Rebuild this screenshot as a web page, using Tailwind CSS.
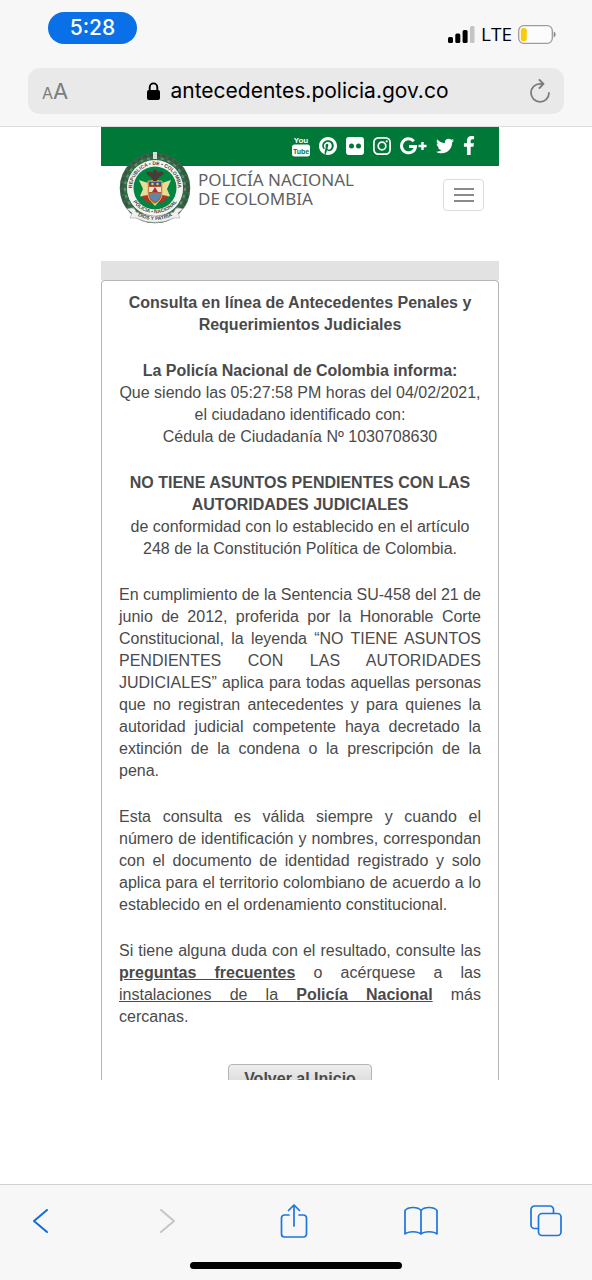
<!DOCTYPE html>
<html lang="es">
<head>
<meta charset="utf-8">
<meta name="viewport" content="width=device-width, initial-scale=1">
<title>Antecedentes - Policía Nacional de Colombia</title>
<script src="https://cdn.jsdelivr.net/npm/@tailwindcss/browser@4"></script>
</head>
<body class="flex min-h-screen flex-col bg-white font-['Liberation_Sans',Arial,sans-serif] text-base text-[#4a4a4a]">

<!-- Browser top chrome -->
<div class="border-b border-[#dcdcdc] bg-[#f7f7f7] px-7 pt-3 pb-3 font-[Inter,sans-serif] text-black">
  <div class="flex h-8 items-center justify-between pr-2 pl-5">
    <div class="flex h-8 w-[89px] items-center justify-center rounded-full bg-[#0a70e8] text-[21px] font-medium text-white">5:28</div>
    <div class="flex items-center gap-1.5 pt-3">
      <svg class="h-[17px] w-[27px]" viewBox="0 0 27 17" aria-hidden="true">
        <rect x="0" y="11" width="5" height="6" rx="1.5"/><rect x="7.300" y="7.500" width="5" height="9.500" rx="1.500"/><rect x="14.600" y="4" width="5" height="13" rx="1.500"/><rect x="22" y="0" width="4.500" height="17" rx="1.500" fill="#c4c4c4"/>
      </svg>
      <span class="font-['Open_Sans',sans-serif] text-[19px] leading-5 font-medium">LTE</span>
      <svg class="h-[19px] w-[38px]" viewBox="0 0 38 19" aria-hidden="true">
        <rect x=".7" y=".7" width="33.600" height="17.600" rx="5" fill="#fcfcfc" stroke="#9b9b9b" stroke-width="1.300"/>
        <rect x="2.800" y="3" width="6" height="13" rx="2.600" fill="#f9cb0b"/>
        <path d="M35.700 6.500q2 1 2 3t-2 3z" fill="#8b8b8b"/>
      </svg>
    </div>
  </div>
  <div class="mt-6 flex h-[46px] items-center justify-between rounded-xl bg-[#e9e9e9] pr-3 pl-3.5">
    <button class="flex w-8 items-baseline text-[#7d7d7d]" aria-label="Tamaño del texto"><span class="text-[16px]">A</span><span class="text-[22px]">A</span></button>
    <div class="flex items-center gap-2.5 pl-0.5">
      <svg class="h-[18px] w-[13px]" viewBox="0 0 13 18" aria-hidden="true"><rect x="0" y="8" width="13" height="10" rx="2"/><path d="M2.700 9V5.400a3.800 4 0 0 1 7.600 0V9" fill="none" stroke="#000" stroke-width="1.900"/></svg>
      <span class="text-[21px] leading-7">antecedentes.policia.gov.co</span>
    </div>
    <button class="flex w-8 justify-center pl-2" aria-label="Recargar">
      <svg class="h-6 w-5" viewBox="0 0 20 24" fill="none" stroke="#7b7b7b" stroke-width="1.800" stroke-linecap="round" stroke-linejoin="round"><path d="M13 4.800H10A9 9 0 1 0 19 14M9.500 1l4 3.900-4 4.100"/></svg>
    </button>
  </div>
</div>

<!-- Web page -->
<main class="flex-1 pr-[93px] pl-[101px]">
  <header class="relative">
    <nav class="flex h-[39px] items-center justify-end gap-[9px] bg-[#007838] pr-6 pb-0.5 text-white" aria-label="Redes sociales">
      <a href="#" aria-label="YouTube"><svg class="h-[22px] w-[18px]" viewBox="0 0 18 22"><text x="9" y="8" text-anchor="middle" font-family="Liberation Sans Narrow, Liberation Sans, sans-serif" font-size="8" font-weight="700" fill="#fff">You</text><rect x="0" y="9.500" width="18" height="12" rx="2.500" fill="#fff"/><text x="9" y="18.500" text-anchor="middle" font-family="Liberation Sans Narrow, Liberation Sans, sans-serif" font-size="7" font-weight="700" fill="#007838">Tube</text></svg></a>
      <a href="#" aria-label="Pinterest"><svg class="h-[18px] w-[18px]" viewBox="0 8 496 496" fill="currentColor"><path d="M496 256c0 137-111 248-248 248-25.600 0-50.200-3.900-73.400-11.100 10.100-16.500 25.200-43.500 30.800-65 3-11.600 15.400-59 15.400-59 8.100 15.400 31.700 28.500 56.800 28.500 74.800 0 128.700-68.800 128.700-154.300 0-81.900-66.900-143.200-152.900-143.200-107 0-163.900 71.800-163.900 150.100 0 36.400 19.400 81.700 50.300 96.100 4.700 2.200 7.200 1.200 8.300-3.300.8-3.400 5-20.300 6.900-28.100.6-2.500.3-4.700-1.700-7.100-10.100-12.500-18.300-35.300-18.300-56.600 0-54.700 41.400-107.600 112-107.600 60.900 0 103.600 41.500 103.600 100.900 0 67.100-33.900 113.600-78 113.600-24.300 0-42.600-20.100-36.700-44.800 7-29.500 20.500-61.300 20.500-82.600 0-19-10.200-34.900-31.400-34.900-24.900 0-44.900 25.700-44.900 60.200 0 22 7.400 36.800 7.400 36.800s-24.500 103.800-29 123.200c-5 21.400-3 51.600-.9 71.200C65.400 450.900 0 361.100 0 256 0 119 111 8 248 8s248 111 248 248z"/></svg></a>
      <a href="#" aria-label="Flickr"><svg class="h-[18px] w-[18px]" viewBox="0 0 18 18"><rect width="18" height="18" rx="3" fill="#fff"/><circle cx="5.500" cy="9" r="2.500" fill="#007838"/><circle cx="12.500" cy="9" r="2.500" fill="#007838"/></svg></a>
      <a href="#" aria-label="Instagram"><svg class="h-[18px] w-[18px]" viewBox="0 0 18 18" fill="none" stroke="#fff" stroke-width="1.700"><rect x=".9" y=".9" width="16.200" height="16.200" rx="4.500"/><circle cx="9" cy="9" r="3.800"/><circle cx="13.700" cy="4.300" r="1.100" fill="#fff" stroke="none"/></svg></a>
      <a href="#" aria-label="Google Plus"><svg class="h-[18px] w-[27px]" viewBox="0 0 27 18" fill="none" stroke="#fff"><path d="M13.800 4.200A7 7 0 1 0 15.500 9.500H9" stroke-width="3"/><path d="M22.500 5v8M18.500 9h8" stroke-width="2.400"/></svg></a>
      <a href="#" aria-label="Twitter"><svg class="h-[18px] w-[18px]" viewBox="0 0 512 512" fill="currentColor"><path d="M459.370 151.716c.325 4.548.325 9.097.325 13.645 0 138.720-105.583 298.558-298.558 298.558-59.452 0-114.680-17.219-161.137-47.106 8.447.974 16.568 1.299 25.340 1.299 49.055 0 94.213-16.568 130.274-44.832-46.132-.975-84.792-31.188-98.112-72.772 6.498.974 12.995 1.624 19.818 1.624 9.421 0 18.843-1.300 27.614-3.573-48.081-9.747-84.143-51.980-84.143-102.985v-1.299c13.969 7.797 30.214 12.670 47.431 13.319-28.264-18.843-46.781-51.005-46.781-87.391 0-19.492 5.197-37.360 14.294-52.954 51.655 63.675 129.300 105.258 216.365 109.807-1.624-7.797-2.599-15.918-2.599-24.040 0-57.828 46.782-104.934 104.934-104.934 30.213 0 57.502 12.670 76.670 33.137 23.715-4.548 46.456-13.320 66.599-25.340-7.798 24.366-24.366 44.833-46.132 57.827 21.117-2.273 41.584-8.122 60.426-16.243-14.292 20.791-32.161 39.308-52.628 54.253z"/></svg></a>
      <a href="#" aria-label="Facebook"><svg class="h-[19px] w-3" viewBox="0 0 320 512" fill="currentColor"><path d="M279.140 288l14.220-92.660h-88.910v-60.130c0-25.350 12.420-50.060 52.240-50.060h40.420V6.260S260.430 0 225.360 0c-73.220 0-121.080 44.380-121.080 124.720v70.620H22.890V288h81.390v224h100.170V288z"/></svg></a>
    </nav>
    <div class="flex items-start justify-between pt-1 pr-[15px] pl-[97px]">
      <p class="font-['Noto_Sans',sans-serif] text-[17px] leading-[19px] text-[#5f5f5f]">POLICÍA NACIONAL<br>DE COLOMBIA</p>
      <button class="mt-[9px] flex h-8 w-[41px] flex-col items-center justify-center gap-1 rounded border border-[#dcdcdc] bg-white" aria-label="Menú">
        <span class="h-0.5 w-5 bg-[#8a8a8a]"></span><span class="h-0.5 w-5 bg-[#8a8a8a]"></span><span class="h-0.5 w-5 bg-[#8a8a8a]"></span>
      </button>
    </div>
    <!-- Emblem overlapping the green bar -->
    <svg class="absolute top-[25px] left-[18px] h-[72px] w-[72px]" viewBox="0 0 72 72" aria-hidden="true">
      <defs>
        <path id="arcTop" d="M14 42.700A23 23 0 1 1 58 42.700"/>
        <path id="arcBottom" d="M10.500 42A26.500 26.500 0 0 0 61.500 42"/>
        <path id="ribbon" d="M17 63Q36 73 55 63"/>
      </defs>
      <circle cx="36" cy="36" r="31.500" fill="none" stroke="#2f6b45" stroke-width="7.500"/>
      <circle cx="36" cy="36" r="33" fill="none" stroke="#3f4f43" stroke-width="2.500" stroke-dasharray="4 2.500"/>
      <circle cx="36" cy="36" r="30" fill="none" stroke="#6f8a72" stroke-width="2" stroke-dasharray="3 4"/>
      <path d="M34 0h4v7h-4z" fill="#cfe2d4"/>
      <circle cx="36" cy="36" r="28" fill="#f3f3ef"/>
      <circle cx="36" cy="36" r="21.500" fill="#008542"/>
      <g font-family="Liberation Sans, sans-serif" font-weight="700" fill="#444">
        <text font-size="5"><textPath href="#arcTop" startOffset="50%" text-anchor="middle">REPÚBLICA • DE • COLOMBIA</textPath></text>
        <text font-size="5"><textPath href="#arcBottom" startOffset="50%" text-anchor="middle">POLICÍA • NACIONAL</textPath></text>
      </g>
      <path d="M20 28l9 3 7-5 7 5 9-3-4 9 3 7-8 2-7 8-7-8-8-2 3-7z" fill="#e9dc96"/>
      <path d="M23 44l6-1 3 8-5-1zM49 44l-6-1-3 8 5-1z" fill="#b0342c"/>
      <path d="M29 29h14v13q0 6-7 10-7-4-7-10z" fill="#b5533f" stroke="#e0b640"/>
      <path d="M30 30h12v4H30z" fill="#3a5686"/>
      <path d="M30 35h12v5H30z" fill="#f1e2cf"/>
      <path d="M30 41h12v2q-1 4-6 7-5-3-6-7z" fill="#5c88a8"/>
      <circle cx="33.500" cy="32" r="1.300" fill="#efc342"/><circle cx="38.500" cy="32" r="1.300" fill="#efc342"/><path d="M33 40l3-5 3 5z" fill="#a72f2c"/>
      <path d="M27 21q4-3 7 0v-3h4v3q3-3 7 0-2 3-5 4l-2 4h-4l-2-4q-3-1-5-4z" fill="#4b3a35"/>
      <path d="M8 57q8-3 9 3 19 8 38 0 1-6 9-3l-5 4 2 5h-6q-19 9-38 0h-6l2-5z" fill="#f0f0f0" stroke="#a5a5a5" stroke-width=".6"/>
      <text font-family="Liberation Sans, sans-serif" font-size="5" font-weight="700" fill="#444"><textPath href="#ribbon" startOffset="50%" text-anchor="middle">DIOS Y PATRIA</textPath></text>
    </svg>
  </header>

  <div class="mt-[50px] h-[19px] bg-[#e2e2e2]"></div>
  <section class="rounded-t border-x border-t border-[#b5b5b5] px-[17px] pt-[11px] leading-[22px]">
    <div class="flex flex-col gap-6">
      <h1 class="text-center font-bold">Consulta en línea de Antecedentes Penales y Requerimientos Judiciales</h1>
      <p class="text-center"><b>La Policía Nacional de Colombia informa:</b><br>Que siendo las 05:27:58 PM horas del 04/02/2021,<br>el ciudadano identificado con:<br>Cédula de Ciudadanía Nº 1030708630</p>
      <p class="text-center"><b>NO TIENE ASUNTOS PENDIENTES CON LAS AUTORIDADES JUDICIALES</b><br>de conformidad con lo establecido en el artículo<br>248 de la Constitución Política de Colombia.</p>
      <p class="text-justify">En cumplimiento de la Sentencia SU-458 del 21 de junio de 2012, proferida por la Honorable Corte Constitucional, la leyenda “NO TIENE ASUNTOS PENDIENTES CON LAS AUTORIDADES JUDICIALES” aplica para todas aquellas personas que no registran antecedentes y para quienes la autoridad judicial competente haya decretado la extinción de la condena o la prescripción de la pena.</p>
      <p class="text-justify">Esta consulta es válida siempre y cuando el número de identificación y nombres, correspondan con el documento de identidad registrado y solo aplica para el territorio colombiano de acuerdo a lo establecido en el ordenamiento constitucional.</p>
      <p class="text-justify">Si tiene alguna duda con el resultado, consulte las <a href="#" class="font-bold underline">preguntas frecuentes</a> o acérquese a las <a href="#" class="underline">instalaciones de la <b>Policía Nacional</b></a> más cercanas.</p>
    </div>
    <!-- The visible page area ends partway down the button -->
    <div class="mt-9 flex h-4 items-start justify-center overflow-hidden">
      <button class="h-[30px] w-36 shrink-0 rounded border border-[#b4b4b4] bg-linear-to-b from-[#efefef] to-[#d0d0d0] font-bold">Volver al Inicio</button>
    </div>
  </section>
</main>

<!-- Browser toolbar -->
<footer class="border-t border-[#d2d2d2] bg-[#f7f7f7] pt-[18px] pb-[11px] text-[#1d76dc]">
  <nav class="flex h-9 items-center justify-between pr-[30px] pl-8" aria-label="Navegador">
    <button aria-label="Atrás"><svg class="h-7 w-[18px]" viewBox="0 0 18 28" fill="none" stroke="#126bdc" stroke-width="2" stroke-linecap="round" stroke-linejoin="round"><path d="M15 3L2 14l13 11"/></svg></button>
    <button disabled class="pl-6" aria-label="Adelante"><svg class="h-7 w-[18px]" viewBox="0 0 18 28" fill="none" stroke="#c5c5c5" stroke-width="2" stroke-linecap="round" stroke-linejoin="round"><path d="M3 3l13 11L3 25"/></svg></button>
    <button class="pl-5" aria-label="Compartir"><svg class="h-9 w-7" viewBox="0 0 28 36" fill="none" stroke="currentColor" stroke-width="1.700" stroke-linecap="round" stroke-linejoin="round"><path d="M9 12H4.500A3 3 0 0 0 1.500 15v16a3 3 0 0 0 3 3h19a3 3 0 0 0 3-3V15a3 3 0 0 0-3-3H19M14 23V2M8.500 7.500L14 2l5.500 5.500"/></svg></button>
    <button class="pl-3" aria-label="Marcadores"><svg class="h-[30px] w-[34px]" viewBox="0 0 34 30" fill="none" stroke="currentColor" stroke-width="1.700" stroke-linecap="round" stroke-linejoin="round"><path d="M17 4.500C14 .5 4 .5 1 4.500V28c3-3 13-3 16 0 3-3 13-3 16 0V4.500C30 .5 20 .5 17 4.500V28"/></svg></button>
    <button class="pl-2" aria-label="Pestañas"><svg class="h-8 w-8" viewBox="0 0 32 32" fill="none" stroke="currentColor" stroke-width="1.700"><path d="M8.500 23.500H4.500a3.500 3.500 0 0 1-3.500-3.500V4.500A3.500 3.500 0 0 1 4.500 1H20a3.500 3.500 0 0 1 3.500 3.500v4"/><rect x="8.500" y="8.500" width="22.500" height="22" rx="3.500"/></svg></button>
  </nav>
  <div class="mx-auto mt-[23px] h-[7px] w-[212px] rounded-full bg-black"></div>
</footer>
</body>
</html>
